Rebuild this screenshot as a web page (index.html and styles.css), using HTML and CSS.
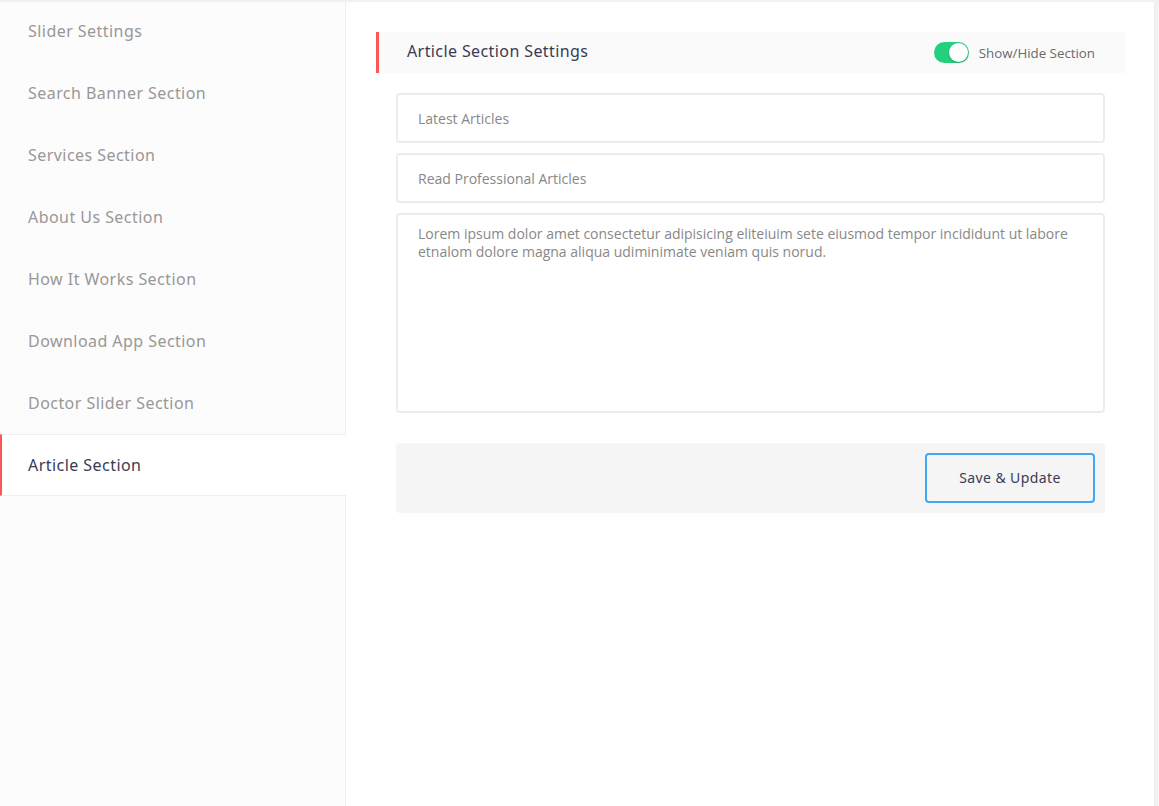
FILE: index.html
```html
<!DOCTYPE html>
<html>
<head>
<meta charset="utf-8">
<link rel="stylesheet" href="styles.css">
</head>
<body>
<div class="page">
  <aside class="sidebar">
    <a class="nav-item">Slider Settings</a>
    <a class="nav-item">Search Banner Section</a>
    <a class="nav-item">Services Section</a>
    <a class="nav-item">About Us Section</a>
    <a class="nav-item">How It Works Section</a>
    <a class="nav-item">Download App Section</a>
    <a class="nav-item">Doctor Slider Section</a>
    <a class="nav-item active">Article Section</a>
    <div class="nav-rest"></div>
  </aside>
  <main class="main">
    <div class="section-head">
      <h3 class="section-title">Article Section Settings</h3>
      <label class="toggle-wrap">
        <span class="toggle"><span class="knob"></span></span>
        <span class="toggle-label">Show/Hide Section</span>
      </label>
    </div>
    <form class="form">
      <input class="field" type="text" value="Latest Articles">
      <input class="field" type="text" value="Read Professional Articles">
      <textarea class="field area">Lorem ipsum dolor amet consectetur adipisicing eliteiuim sete eiusmod tempor incididunt ut labore etnalom dolore magna aliqua udiminimate veniam quis norud.</textarea>
      <div class="actions">
        <button class="btn" type="button">Save &amp; Update</button>
      </div>
    </form>
  </main>
  <div class="edge"></div>
</div>
</body>
</html>
```
FILE: styles.css
```css
* { box-sizing: border-box; }
html, body { margin: 0; padding: 0; height: 100%; }
body {
  background: #fff;
  font-family: "Noto Sans", sans-serif;
  border-top: 2px solid #f1f1f1;
}
.page {
  display: flex;
  height: 804px;
}
.sidebar {
  width: 346px;
  flex: none;
  background: #fcfcfc;
  border-right: 1px solid #efefef;
  display: flex;
  flex-direction: column;
}
.nav-item {
  display: flex;
  align-items: center;
  height: 62px;
  padding-left: 28px;
  font-size: 16px;
  color: #999797;
  letter-spacing: 0.45px;
}
.nav-item:first-child { height: 60px; padding-bottom: 2px; }
.nav-item.active {
  background: #fff;
  color: #3a3b55;
  border-left: 2px solid #fb5753;
  padding-left: 26px;
  border-top: 1px solid #efefef;
  border-bottom: 1px solid #efefef;
  height: 62px;
  margin-right: -1px;
}
.nav-rest { flex: 1; }
.main {
  flex: 1;
  padding: 30px 29px 0 30px;
}
.section-head {
  display: flex;
  align-items: center;
  justify-content: space-between;
  height: 41px;
  background: #fafafa;
  border-left: 3px solid #fb5753;
  padding: 0 30px 0 28px;
}
.section-title {
  margin: 0 0 3px 0;
  font-weight: 400;
  font-size: 16px;
  letter-spacing: 0.4px;
  color: #3a3b55;
}
.toggle-wrap {
  display: flex;
  align-items: center;
  gap: 10px;
}
.toggle {
  width: 35px;
  height: 21px;
  border-radius: 11px;
  background: #25d07d;
  position: relative;
}
.knob {
  position: absolute;
  right: 1px;
  top: 1px;
  width: 19px;
  height: 19px;
  border-radius: 50%;
  background: #fff;
  box-shadow: 0 1px 2px rgba(0,0,0,0.25);
}
.toggle-label {
  font-family: "Open Sans", sans-serif;
  font-size: 13.3px;
  color: #6a6a6a;
}
.form {
  display: flex;
  flex-direction: column;
  gap: 10px;
  padding: 20px 20px 0 20px;
}
.field {
  display: block;
  width: 100%;
  height: 50px;
  border: 2px solid #ececec;
  border-radius: 4px;
  background: #fff;
  padding: 0 20px;
  font-family: "Open Sans", sans-serif;
  font-size: 14px;
  color: #888;
  outline: none;
}
.field.area {
  height: 200px;
  padding: 10px 20px;
  resize: none;
  line-height: 18px;
}
.actions {
  margin-top: 20px;
  background: #f5f5f5;
  border-radius: 4px;
  height: 70px;
  display: flex;
  align-items: center;
  justify-content: flex-end;
  padding-right: 10px;
}
.btn {
  width: 170px;
  height: 50px;
  background: #f5f5f5;
  border: 2px solid #3fa8f4;
  border-radius: 4px;
  font-family: "Noto Sans", sans-serif;
  font-size: 14px;
  letter-spacing: 0.4px;
  color: #3a3b55;
  padding-bottom: 2px;
}
.edge {
  width: 5px;
  flex: none;
  background: #f3f3f3;
  border-left: 1px solid #ececec;
}
```
